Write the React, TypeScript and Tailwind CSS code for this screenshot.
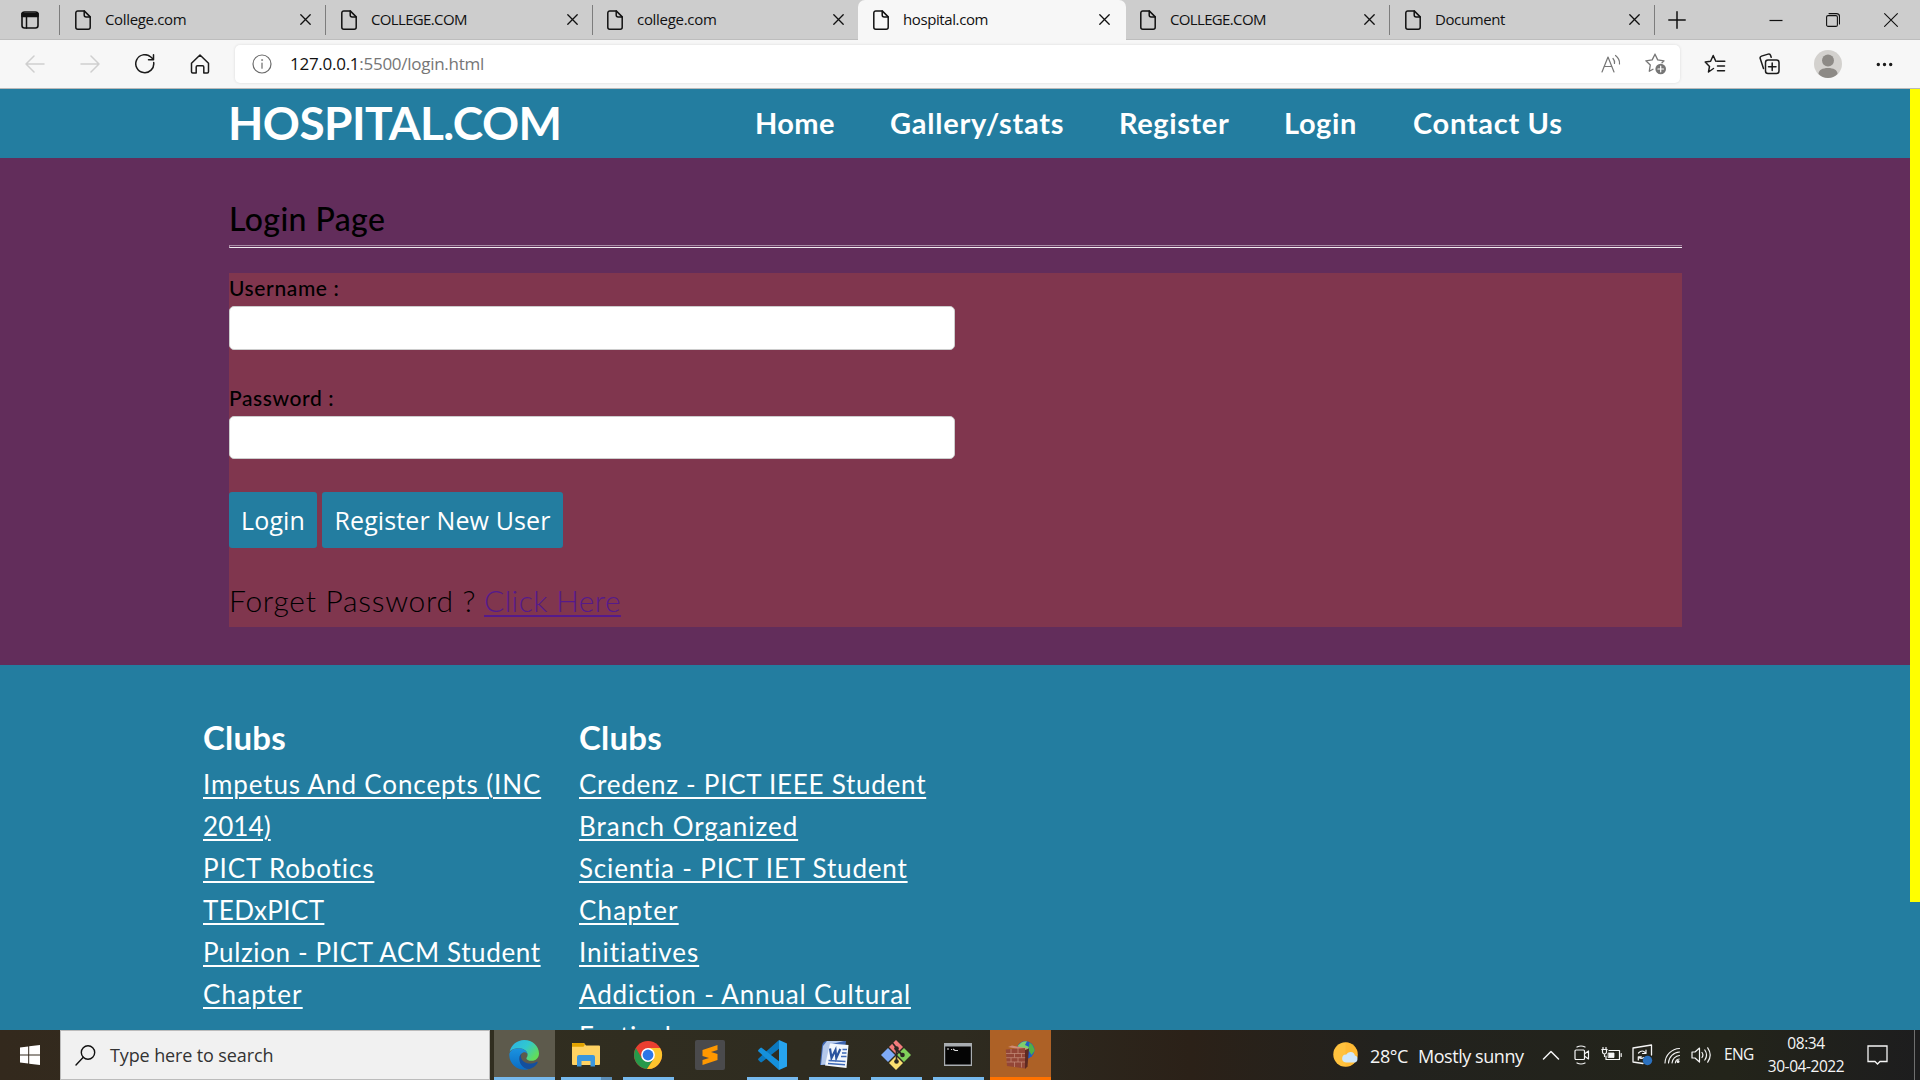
import React from "react";

type Kids = { children: React.ReactNode };

/* ---------- small drawings ---------- */

function Svg({ w, h, vb, className = "", children }: { w: number; h: number; vb?: string; className?: string } & Kids) {
  return (
    <svg
      width={w}
      height={h}
      viewBox={vb ?? `0 0 ${w} ${h}`}
      fill="none"
      stroke="currentColor"
      strokeWidth={1.5}
      strokeLinecap="round"
      strokeLinejoin="round"
      className={`block shrink-0 ${className}`}
    >
      {children}
    </svg>
  );
}

const PageIcon = () => (
  <Svg w={16} h={20}>
    <path d="M2.8.9h6.4l6 6v10.3a2 2 0 0 1-2 2H2.8a2 2 0 0 1-2-2V2.900a2 2 0 0 1 2-2z" />
    <path d="M9.200 1v4a2 2 0 0 0 2 2h4" />
  </Svg>
);

const CloseIcon = () => (
  <Svg w={11} h={11}>
    <path d="M.8.8l9.400 9.400M10.200.8L.8 10.200" strokeWidth={1.3} />
  </Svg>
);

/* ---------- browser tabs ---------- */

function Tab({ title, width, text }: { title: string; width: string; text: string }) {
  return (
    <div className={`flex h-8 items-center ${width}`}>
      <PageIcon />
      <span className={`ml-[14px] grow whitespace-nowrap text-[15px] ${text}`}>{title}</span>
      <CloseIcon />
    </div>
  );
}

const Divider = () => <div className="h-[30px] w-px bg-[#7d7d7d]" />;

function TabBar() {
  return (
    <div className="flex h-10 items-center border-b border-[#bdbdbd] bg-[#cdcdcd] text-[#111]">
      <div className="flex w-[59px] items-center pl-[21px]">
        <Svg w={18} h={18}>
          <rect x="1" y="1" width="16" height="16" rx="2.5" strokeWidth={1.6} />
          <path d="M1 2.500h16v3H1z" fill="currentColor" />
          <path d="M5.500 6v11" />
        </Svg>
      </div>
      <Divider />
      <div className="w-[265px] pl-[15px] pr-[14px]"><Tab title="College.com" width="w-full" text="tracking-[-0.35px]" /></div>
      <Divider />
      <div className="w-[266px] pl-[15px] pr-[14px]"><Tab title="COLLEGE.COM" width="w-full" text="tracking-[-0.65px]" /></div>
      <Divider />
      <div className="w-[265px] pl-[14px] pr-[14px]"><Tab title="college.com" width="w-full" text="tracking-[-0.3px]" /></div>
      <div className="flex h-10 w-[268px] items-center rounded-t-[7px] bg-[#f7f7f7] pl-[15px] pr-4">
        <Tab title="hospital.com" width="w-full" text="tracking-[-0.4px]" />
      </div>
      <div className="w-[263px] pl-[14px] pr-[14px]"><Tab title="COLLEGE.COM" width="w-full" text="tracking-[-0.65px]" /></div>
      <Divider />
      <div className="w-[264px] pl-[15px] pr-[14px]"><Tab title="Document" width="w-full" text="tracking-[-0.4px]" /></div>
      <Divider />
      <Svg w={18} h={18} className="ml-[13px]">
        <path d="M9 .8v16.400M.8 9h16.400" />
      </Svg>
      <Svg w={14} h={14} className="ml-[83px]">
        <path d="M.5 7.500h13" strokeWidth={1.2} strokeLinecap="butt" />
      </Svg>
      <Svg w={14} h={14} className="ml-[43px]">
        <rect x=".6" y="2.600" width="10.800" height="10.800" rx="1.500" strokeWidth={1.1} />
        <path d="M3 .6h7.500a3 3 0 0 1 3 3V11" strokeWidth={1.1} />
      </Svg>
      <Svg w={14} h={14} className="ml-[44px]">
        <path d="M.6.6l12.800 12.800M13.400.6L.6 13.400" strokeWidth={1.1} />
      </Svg>
    </div>
  );
}

/* ---------- address bar ---------- */

function Toolbar() {
  return (
    <div className="flex h-[49px] items-center border-b border-[#b9b9b9] bg-[#f7f7f7] pl-[25px] text-[#1b1b1b]">
      <Svg w={20} h={18} className="text-[#cfcfcf]">
        <path d="M19 9H1M9 1L1 9l8 8" />
      </Svg>
      <Svg w={20} h={18} className="ml-[35px] text-[#cfcfcf]">
        <path d="M1 9h18M11 1l8 8-8 8" />
      </Svg>
      <Svg w={20} h={20} className="ml-[35px]">
        <path d="M18.700 8.500A9 9 0 1 1 15.800 3l2.700 2.500M18.500.8v5h-5" />
      </Svg>
      <Svg w={20} h={20} className="ml-[35px]">
        <path d="M1.500 9.300L10 1l8.500 8.300v8.500a1.200 1.200 0 0 1-1.200 1.200h-3.500v-6a1.200 1.200 0 0 0-1.200-1.200H7.400A1.200 1.200 0 0 0 6.200 13v6H2.700a1.200 1.200 0 0 1-1.200-1.200z" />
      </Svg>
      <div className="ml-[25px] flex h-[38px] w-[1445px] items-center rounded-[5px] bg-white pl-[17px] pr-[13px] shadow-[0_0_3px_rgba(0,0,0,0.12)]">
        <Svg w={20} h={20} className="text-[#6b6b6b]">
          <circle cx="10" cy="10" r="9" strokeWidth={1.2} />
          <path d="M10 9v5.200" strokeWidth={1.2} />
          <circle cx="10" cy="6" r=".6" fill="currentColor" strokeWidth={0.5} />
        </Svg>
        <span className="ml-[18px] grow whitespace-nowrap text-[17px] tracking-[-0.27px] text-[#767676]">
          <span className="text-[#111]">127.0.0.1</span>:5500/login.html
        </span>
        <Svg w={20} h={20} className="text-[#767676]">
          <path d="M1 18L7 3l6 15M3 12.500h8M12 4.500q2 2.300 1.500 5M14.500 1.500q4.500 3.500 4 8.500" strokeWidth={1.2} />
        </Svg>
        <Svg w={22} h={22} className="ml-[24px] text-[#767676]">
          <path d="M10 1.200l2.700 5.700 6.300.9-2 2M8 16.200l-3.700 2 1-6.200L.9 7.800l6.300-.9L10 1.200" strokeWidth={1.3} />
          <circle cx="15.700" cy="16" r="5.300" fill="currentColor" stroke="none" />
          <path d="M15.700 13.200v5.600M12.900 16h5.600" stroke="#fff" strokeWidth={1.200} />
        </Svg>
      </div>
      <Svg w={22} h={20} className="ml-[24px]">
        <path d="M12.800 7.200h8M13.500 12h7M13.500 16.800h7" />
        <path d="M9.500 14.500l-5 3.500 1-5.600L1.200 8l5.400-.8L9.200 1.500l2.600 5.700" />
      </Svg>
      <Svg w={21} h={22} className="ml-[33px]">
        <path d="M4.500 15.500L1.200 5.600a2 2 0 0 1 1.300-2.500l6.600-2a2 2 0 0 1 2.500 1.300l.6 1.800" />
        <rect x="6.500" y="7" width="13.500" height="13.500" rx="2.500" />
        <path d="M13.200 10v7.500M9.500 13.700H17" />
      </Svg>
      <Svg w={28} h={28} className="ml-[34px]">
        <circle cx="14" cy="14" r="14" fill="#d3d1ce" stroke="none" />
        <circle cx="14" cy="10.500" r="6" fill="#8d8a86" stroke="none" />
        <path d="M4.500 24c0-4 4-6 9.500-6s9.500 2 9.500 6A14 14 0 0 1 14 28a14 14 0 0 1-9.500-4z" fill="#8d8a86" stroke="none" />
      </Svg>
      <Svg w={17} h={5} className="ml-[34px]">
        <path d="M2.300 2.500h.01M8.500 2.500h.01M14.700 2.500h.01" strokeWidth={3.4} />
      </Svg>
    </div>
  );
}

/* ---------- web page ---------- */

function Header() {
  return (
    <header className="flex h-[69px] bg-[#237da0] pl-[228px] text-white">
      <h1 className="h-[67px] w-[527px] text-[46px] font-bold leading-[67px] tracking-[-0.6px]">HOSPITAL.COM</h1>
      <nav className="flex h-[68px] text-[29px] font-bold leading-[68px]">
        <a className="w-[135px] tracking-[0.4px]">Home</a>
        <a className="w-[229px] tracking-[0.75px]">Gallery/stats</a>
        <a className="w-[165px] tracking-[0.6px]">Register</a>
        <a className="w-[129px] tracking-[0.6px]">Login</a>
        <a className="whitespace-nowrap tracking-[0.7px]">Contact Us</a>
      </nav>
    </header>
  );
}

function LoginSection() {
  return (
    <section className="h-[507px] bg-[#622d5b] pl-[229px] pt-10 text-black">
      <div className="w-[1453px]">
        <h2 className="h-10 text-[32px] font-medium leading-[42px] tracking-[0.4px]">Login Page</h2>
        <div className="mt-[7px] h-[3px] border-b border-l border-t border-b-[#f1edf0] border-l-[#a88ba4] border-t-[#a88ba4]" />
        <form className="mt-[25px] h-[354px] bg-[#80364e]">
          <label className="block h-7 text-[21px] font-medium leading-[30px] tracking-[0.62px]">Username :</label>
          <input readOnly className="mt-[5px] block h-[44px] w-[726px] rounded-[5px] border border-[#ccc] bg-white" />
          <label className="mt-[33px] block h-7 text-[21px] font-medium leading-[30px] tracking-[0.6px]">Password :</label>
          <input readOnly className="mt-[5px] block h-[43px] w-[726px] rounded-[5px] border border-[#ccc] bg-white" />
          <div className="mt-[33px] flex gap-[5px] font-['Open_Sans',sans-serif] text-[25px] text-white">
            <button type="button" className="h-14 w-[88px] rounded-[3px] bg-[#237da0] pt-[2px] tracking-[0.1px]">Login</button>
            <button type="button" className="h-14 w-[241px] rounded-[3px] bg-[#237da0] pt-[2px] tracking-[0.12px]">Register New User</button>
          </div>
          <p className="mt-[25px] flex h-[54px] whitespace-nowrap text-[30px] font-light leading-[55px]">
            <span className="w-[255px] tracking-[0.7px]">Forget Password ?</span>
            <a className="tracking-[0.35px] text-[#551a8b] underline decoration-2 underline-offset-[3px] [text-decoration-skip-ink:none]">Click Here</a>
          </p>
        </form>
      </div>
    </section>
  );
}

function Club({ lines }: { lines: [string, string][] }) {
  return (
    <div className="w-[376px]">
      <h3 className="h-[42px] text-[33px] font-bold leading-[43px] tracking-[0.2px]">Clubs</h3>
      <ul className="mt-[5px] whitespace-nowrap text-[26px] leading-[42px] underline decoration-2 underline-offset-[3px]">
        {lines.map(([line, tracking]) => (
          <li key={line} className={`h-[42px] ${tracking}`}>{line}</li>
        ))}
      </ul>
    </div>
  );
}

function Footer() {
  return (
    <footer className="flex h-[365px] overflow-hidden bg-[#237da0] pl-[203px] pt-[51px] text-white">
      <Club
        lines={[
          ["Impetus And Concepts (INC", "tracking-[0.88px]"],
          ["2014)", "tracking-[0.1px]"],
          ["PICT Robotics", "tracking-[0.88px]"],
          ["TEDxPICT", "tracking-[0.4px]"],
          ["Pulzion - PICT ACM Student", "tracking-[0.62px]"],
          ["Chapter", "tracking-[1.15px]"],
        ]}
      />
      <Club
        lines={[
          ["Credenz - PICT IEEE Student", "tracking-[0.74px]"],
          ["Branch Organized", "tracking-[0.98px]"],
          ["Scientia - PICT IET Student", "tracking-[0.82px]"],
          ["Chapter", "tracking-[1.15px]"],
          ["Initiatives", "tracking-[0.95px]"],
          ["Addiction - Annual Cultural", "tracking-[0.86px]"],
          ["Festival", "tracking-[0.8px]"],
        ]}
      />
    </footer>
  );
}

/* ---------- taskbar ---------- */

function TaskButton({ bar = "bg-[#76b9ed]", cell = "", wide = false, children }: { bar?: string; cell?: string; wide?: boolean } & Kids) {
  return (
    <div className={`flex h-[50px] w-[61px] flex-col items-center pt-[10px] ${cell}`}>
      <svg width="30" height="30" viewBox="0 0 30 30" className="-ml-px block">{children}</svg>
      <div className={`mt-[7px] h-[3px] ${wide ? "w-full" : "w-[51px]"} ${bar}`} />
    </div>
  );
}

function Apps() {
  return (
    <div className="ml-[4px] flex gap-px">
      <TaskButton wide cell="bg-[#5d5a4c]">
        <defs>
          <linearGradient id="eg" x1="0" y1="0" x2="1" y2=".6"><stop offset="0" stopColor="#2bb0e8" /><stop offset=".55" stopColor="#31c8cf" /><stop offset="1" stopColor="#62dc5a" /></linearGradient>
          <linearGradient id="eb" x1="0" y1="0" x2="0" y2="1"><stop offset="0" stopColor="#1b93e0" /><stop offset="1" stopColor="#0a6cc4" /></linearGradient>
        </defs>
        <path d="M.6 11.500C2.300 5 8 0 15.200 0 23.500 0 30 6.300 30 13.400c0 4.300-3.300 7.400-7.300 7.400-3.500 0-5.300-1.400-5.300-2.400 0-.8 1.200-1.300 1.200-3.600 0-3.300-3.600-6.500-8.800-6.500C6.200 8.300 2.900 9.500.6 11.500z" fill="url(#eg)" />
        <path d="M.3 15C.2 11 4.400 8.200 9.600 8.200c4.700 0 8.400 2.600 9 6-1.400-1.800-3-2.200-4.500-1.600-3 1.200-4 4.500-3.300 8 .8 4 4.200 7.800 8.500 8.800C10 31.500.4 25 .3 15z" fill="url(#eb)" />
        <path d="M10.500 17c-1.200 6.500 4 12.500 10 12 3.500-1 6.300-3.300 8-6 .5-.9-.3-1.400-1.100-1-6 3-13 1.500-15-3.500-.6-1.500-.5-3 .2-4.800-1 .8-1.800 2-2.100 3.300z" fill="#134f9e" />
      </TaskButton>
      <TaskButton bar="bg-[linear-gradient(to_right,#76b9ed_40px,#5b8db6_40px)]">
        <path d="M1 3h12l2 2.500H28a1 1 0 0 1 1 1V24a1 1 0 0 1-1 1H2a1 1 0 0 1-1-1z" fill="#ffd262" />
        <path d="M1 4a1 1 0 0 1 1-1h10.500l1.500 1.500-1.500 2.300H1z" fill="#e2a300" />
        <path d="M6 26.500V17a2 2 0 0 1 2-2h14a2 2 0 0 1 2 2v9.500h-4.500V21h-9v5.500z" fill="#3b96dd" />
      </TaskButton>
      <TaskButton>
        <circle cx="15" cy="15" r="14" fill="#ea3f30" />
        <path d="M2.900 8a14 14 0 0 0 11 20.950L21 18.500l-6 3.500-6-3.500z" fill="#27994a" />
        <path d="M27.100 8H15l6 10.500L14 29A14 14 0 0 0 27.100 8z" fill="#fdc42c" />
        <circle cx="15" cy="15" r="6.900" fill="#fff" />
        <circle cx="15" cy="15" r="5.400" fill="#2b76e8" />
      </TaskButton>
      <TaskButton bar="bg-transparent">
        <rect width="30" height="30" rx="2" fill="#4a4a4c" />
        <path d="M22.500 5L7.500 10v6l6.500 2-6.500 2v5l15-5v-6L16 12l6.500-2z" fill="#ff9800" />
      </TaskButton>
      <TaskButton>
        <path d="M22 0L1.500 18.500a1.200 1.200 0 0 0 0 1.700L3.300 22a1.200 1.200 0 0 0 1.600.1L22 8.800z" fill="#0b78be" />
        <path d="M22 30L1.500 11.500a1.200 1.200 0 0 1 0-1.700L3.300 8a1.200 1.200 0 0 1 1.600-.1L22 21.200z" fill="#1590dc" />
        <path d="M22 0l8 3.500v23L22 30z" fill="#27a4ef" />
      </TaskButton>
      <TaskButton>
        <path d="M7 1h20l-3 24H1L3 6a6 6 0 0 1 4-5z" fill="#3f66b0" />
        <path d="M8 1h17l-12 3-3 20-8 1L4 6z" fill="#b4c8ea" />
        <path d="M11 3.500L29.500 5l-2 23L6 25.500z" fill="#f3f7fc" />
        <path d="M11 8.500l1.500 9.500 4-8 .8 8 4-9" fill="none" stroke="#2b539f" strokeWidth="2.200" />
        <path d="M23.500 9.500h4.500M23 13h4.500M22 16.500h5.500M9.500 20.500l17 1M9 23.500l17 1.200" stroke="#3d68b5" strokeWidth="1.600" />
      </TaskButton>
      <TaskButton>
        <path d="M15 0l7 7-7 7-7-7z" fill="#f47c7c" />
        <path d="M7 8l7 7-7 7-7-7z" fill="#7fabf7" />
        <path d="M23 8l7 7-7 7-7-7z" fill="#81d05b" />
        <path d="M15 16l7 7-7 7-7-7z" fill="#fbe070" />
        <path d="M11.500 3l4 5v13M15.500 9.500l6 5.500" stroke="#2b2823" strokeWidth="1.700" fill="none" />
        <circle cx="15.500" cy="8.500" r="2.300" fill="#2b2823" /><circle cx="15.500" cy="21.500" r="2.300" fill="#2b2823" /><circle cx="21.500" cy="15" r="2.300" fill="#2b2823" />
      </TaskButton>
      <TaskButton>
        <rect x="1" y="3" width="28" height="23" fill="#a9adb1" />
        <rect x="2.200" y="6.500" width="25.600" height="18" fill="#050505" />
        <path d="M4 9h2M8 9.500h1M10 9l2 1.500h3" stroke="#ddd" strokeWidth="1.200" fill="none" />
      </TaskButton>
      <TaskButton wide cell="bg-[#ad6126]" bar="bg-[#ff7200]">
        <circle cx="20.500" cy="10" r="9" fill="#1f5fc4" />
        <path d="M13 5.500Q17 .8 22 1.200L20 5l4 2-2 5-8-2z" fill="#7fce6c" />
        <path d="M24.500 2.500q5 3.500 5 8.500l-3 4-3-5z" fill="#4fb045" />
        <path d="M3 7l4-1.500 16 3-3 2z" fill="#d08c74" />
        <path d="M.8 9.500L20 8v20.500L2 26z" fill="#934637" />
        <path d="M20 10l4-1.500-1.500 18L20 29z" fill="#5e2a22" />
        <path d="M1 13.500h19M1.200 17.700h19M1.500 22h18.500M6 9v4.500M13 8.500v5M9.500 13.500v4M16.500 13.500v4M6 17.700V22M13 17.700V22M9.500 22v5M16.500 22v5.500" stroke="#c78f7d" strokeWidth=".7" />
      </TaskButton>
    </div>
  );
}

function Tray() {
  return (
    <div className="ml-[282px] flex grow items-center text-[#f5f5f5]">
      <Svg w={26} h={28}>
        <circle cx="12.500" cy="13.500" r="12.200" fill="#ffc23e" stroke="none" />
        <path d="M12.500 1.300a12.200 12.200 0 0 1 0 24.400z" fill="#ffad22" stroke="none" opacity=".35" />
        <path d="M13 21.500a4 4 0 0 1 .3-8 4.600 4.600 0 0 1 8.600 1 3.600 3.600 0 0 1-.4 7z" fill="#cfe8fb" stroke="none" />
      </Svg>
      <span className="ml-[11px] w-[48px] whitespace-nowrap pt-[2px] text-[18px] tracking-[-0.4px]">28°C</span>
      <span className="w-[124px] whitespace-nowrap pt-[2px] text-[18px] tracking-[-0.45px]">Mostly sunny</span>
      <Svg w={18} h={10}>
        <path d="M1.500 9L9 1.500 16.500 9" />
      </Svg>
      <Svg w={16} h={20} className="ml-[14px]">
        <rect x="1" y="5" width="9.500" height="9.500" rx="1" strokeWidth={1.2} />
        <path d="M11 8.500L14.500 6v8L11 11.500M3 2Q7 0 11 2M3 18q4 2 8 0" strokeWidth={1.2} />
      </Svg>
      <Svg w={21} h={16} className="ml-[11px]">
        <path d="M8 3.500h10.500v9H5V9" strokeWidth={1.2} />
        <path d="M7.500 6h5.500v4.500H7.500z" fill="currentColor" strokeWidth={0.8} />
        <path d="M.8 2.500h5.400M2 .5v2M5 .5v2M1.500 3v2a2 2 0 0 0 4 0V3M3.500 7v2.500M20.200 6.500v3" strokeWidth={1.2} />
      </Svg>
      <Svg w={21} h={22} className="ml-[10px]">
        <path d="M1 4l18.500-3v10M1 4v14l10 1.500" strokeWidth={1.3} />
        <path d="M6.500 9q4-4 7 0M14 6v3.500h-3.500M12 13.500q-3 2-5.500-.5M6.300 16v-3.200h3" strokeWidth={1.2} />
        <circle cx="15.500" cy="16.500" r="4.700" fill="#2b71bf" stroke="none" />
      </Svg>
      <Svg w={16} h={17} className="ml-[11px]">
        <path d="M1 16A15 15 0 0 1 15.500 1.500M4.500 16A11.500 11.500 0 0 1 15.500 5M8 16a8 8 0 0 1 7.500-7.500M11.300 16a4.500 4.500 0 0 1 4-4" strokeWidth={1.1} />
        <circle cx="14" cy="14.500" r="1.500" fill="currentColor" stroke="none" />
      </Svg>
      <Svg w={21} h={18} className="ml-[11px]">
        <path d="M1 6v6h3l4.500 4V2L4 6zM11 6.500q1.800 2.500 0 5M13.800 4q3.500 5 0 10M16.700 1.800q5 7.200 0 14.400" strokeWidth={1.200} />
      </Svg>
      <span className="ml-[12px] w-[36px] text-[15.500px] tracking-[-0.6px]">ENG</span>
      <div className="w-[92px] whitespace-nowrap text-center text-[15.500px] leading-[23px] tracking-[-0.45px]">
        <div>08:34</div>
        <div>30-04-2022</div>
      </div>
      <Svg w={21} h={21} className="ml-[15px]">
        <path d="M1 1h19v15.500h-7l-2.500 2.500-2.500-2.500H1z" strokeLinejoin="miter" strokeWidth={1.3} />
      </Svg>
      <div className="ml-auto mr-[5px] h-[50px] w-px bg-[#6f6f6f]" />
    </div>
  );
}

function Taskbar() {
  return (
    <div className="flex h-[50px] bg-[linear-gradient(to_right,#33291d_0%,#312e20_25%,#2e2b20_50%,#2b2118_62%,#22221e_72%,#23241a_90%,#1d1d1e_100%)]">
      <div className="flex w-[60px] items-center justify-center">
        <svg width="20" height="20" viewBox="0 0 20 20" fill="#fff" className="block">
          <path d="M0 2.600L8.200 1.500v8H0zM9.200 1.300L20 0v9.500H9.200zM0 10.500h8.200v8L0 17.400zM9.200 10.500H20V20L9.200 18.700z" />
        </svg>
      </div>
      <div className="flex w-[430px] items-center border border-[#bcbcbc] bg-[#f1f1f1] pl-[14px] text-[#333]">
        <Svg w={21} h={21} className="text-[#111]">
          <circle cx="13" cy="7.500" r="6.700" strokeWidth={1.4} />
          <path d="M8.300 12.300L1 20" strokeWidth={1.4} />
        </Svg>
        <span className="ml-[14px] whitespace-nowrap text-[18px] tracking-[-0.12px]">Type here to search</span>
      </div>
      <Apps />
      <Tray />
    </div>
  );
}

export default function App() {
  return (
    <div className="h-[1080px] w-[1920px] overflow-hidden font-['Open_Sans','Noto_Sans',sans-serif]">
      <TabBar />
      <Toolbar />
      <main className="flex h-[941px] bg-[#237da0] font-['Lato',sans-serif]">
        <div className="w-[1910px]">
          <Header />
          <LoginSection />
          <Footer />
        </div>
        <div className="h-[813px] w-[10px] bg-[#ffff00]" />
      </main>
      <Taskbar />
    </div>
  );
}
